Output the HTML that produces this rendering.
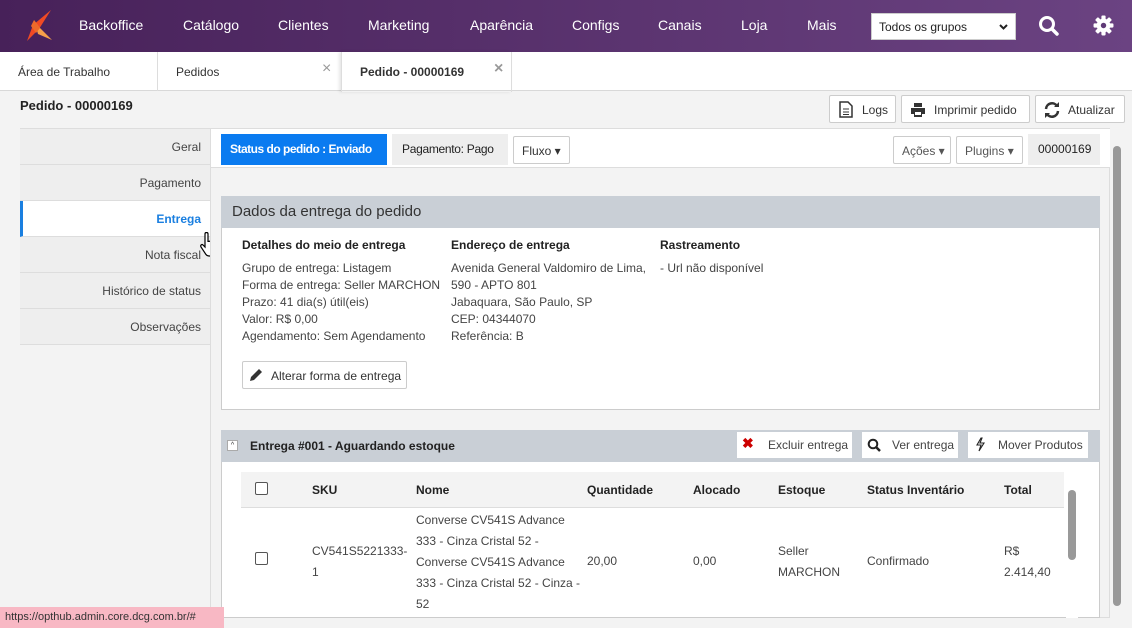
<!DOCTYPE html>
<html><head><meta charset="utf-8"><style>
*{box-sizing:border-box;margin:0;padding:0}
body{width:1132px;height:628px;overflow:hidden;background:#f3f3f3;font-family:"Liberation Sans",sans-serif;font-size:12px;color:#333;position:relative}
.a{position:absolute}
.hdr{left:0;top:0;width:1132px;height:52px;background:linear-gradient(90deg,#472159,#6b4382)}
.nav{color:#fff;font-size:14px;top:17px}
.tabs{left:0;top:52px;width:1132px;height:39px;background:#fff;border-bottom:1px solid #d8d8d8}
.tab{top:0;height:39px;border-right:1px solid #ddd;font-size:12px;padding-top:13px;padding-left:18px}
.x{color:#999;font-size:16px;top:8px}
.btn{background:#fff;border:1px solid #ccc;border-radius:2px;height:28px;font-size:12px;padding:7px 8px;white-space:nowrap}
.menu{left:20px;width:191px;height:36px;background:#eee;border-bottom:1px solid #ddd;text-align:right;padding:11px 10px 0 0;font-size:12px;color:#444}
.lbl{font-weight:bold;font-size:12px;color:#222}
.txt{font-size:12px;line-height:17px;color:#444}
th{text-align:left;font-size:12px;color:#222;height:36px;font-weight:bold}
td{font-size:12px;color:#444;line-height:21px}
.cb{width:13px;height:13px;border:1px solid #555;border-radius:2px;background:#fff;display:inline-block}
</style></head><body>
<div class="a hdr"></div>
<svg class="a" style="left:24px;top:9px" width="32" height="34" viewBox="0 0 32 34"><path d="M27 1 L9 16 L3 32 L15 20 Z" fill="#f04a24"/><path d="M10 11 L16 19 L28 31 L14 25 Z" fill="#f6a04a"/><path d="M10 11 L16 19 L12 24 L7 17Z" fill="#ee6a2a"/></svg>
<div class="a nav" style="left:79px">Backoffice</div>
<div class="a nav" style="left:183px">Catálogo</div>
<div class="a nav" style="left:278px">Clientes</div>
<div class="a nav" style="left:368px">Marketing</div>
<div class="a nav" style="left:470px">Aparência</div>
<div class="a nav" style="left:572px">Configs</div>
<div class="a nav" style="left:658px">Canais</div>
<div class="a nav" style="left:741px">Loja</div>
<div class="a nav" style="left:807px">Mais</div>
<div class="a" style="left:871px;top:13px;width:145px;height:27px;background:#fff;border:1px solid #ccc;padding:6px 7px;font-size:12px;color:#222">Todos os grupos<svg class="a" style="right:7px;top:10px" width="9" height="6" viewBox="0 0 9 6"><path d="M1 1l3.5 3.5L8 1" fill="none" stroke="#222" stroke-width="2"/></svg></div>
<svg class="a" style="left:1038px;top:15px" width="22" height="22" viewBox="0 0 22 22"><circle cx="9" cy="9" r="6.5" fill="none" stroke="#fff" stroke-width="3"/><path d="M14 14 L19 19" stroke="#fff" stroke-width="3.5" stroke-linecap="round"/></svg>
<svg class="a" style="left:1093px;top:15px" width="21" height="21" viewBox="0 0 20 20"><g fill="#fff"><circle cx="10" cy="10" r="6.5"/><rect x="8" y="0.5" width="4" height="19" rx="1"/><rect x="0.5" y="8" width="19" height="4" rx="1"/><rect x="8" y="0.5" width="4" height="19" rx="1" transform="rotate(45 10 10)"/><rect x="8" y="0.5" width="4" height="19" rx="1" transform="rotate(-45 10 10)"/></g><circle cx="10" cy="10" r="2.6" fill="#5f3a77"/></svg>
<div class="a tabs"></div>
<div class="a tab" style="left:0;width:158px;top:52px">Área de Trabalho</div>
<div class="a tab" style="left:158px;width:183px;top:52px;border-right:none">Pedidos<span class="a x" style="left:164px">×</span></div>
<div class="a tab" style="left:341px;width:171px;top:52px;height:40px;font-weight:bold;border-left:1px solid #ddd;box-shadow:-2px 0 3px rgba(0,0,0,.1)">Pedido - 00000169<span class="a x" style="left:152px">×</span></div>
<div class="a" style="left:20px;top:98px;font-weight:bold;font-size:13px;color:#222">Pedido - 00000169</div>
<div class="a btn" style="left:829px;top:95px;width:67px;padding-left:32px">Logs<svg class="a" style="left:9px;top:5px" width="14" height="17" viewBox="0 0 14 17"><path d="M1 1h8l4 4v11H1z" fill="none" stroke="#333" stroke-width="1.5"/><path d="M4 8h6M4 11h6M4 13.5h6" stroke="#333"/></svg></div>
<div class="a btn" style="left:901px;top:95px;width:129px;padding-left:32px">Imprimir pedido<svg class="a" style="left:8px;top:7px" width="16" height="14" viewBox="0 0 16 14"><path d="M4 0h8v4H4zM1 5h14v6h-3v3H4v-3H1z" fill="#333"/><rect x="5" y="9" width="6" height="3" fill="#fff"/></svg></div>
<div class="a btn" style="left:1035px;top:95px;width:90px;padding-left:32px">Atualizar<svg class="a" style="left:8px;top:6px" width="16" height="16" viewBox="0 0 16 16"><path d="M2 7a6 6 0 0 1 11-3M14 9a6 6 0 0 1-11 3" fill="none" stroke="#333" stroke-width="2.5"/><path d="M10 5h5V0zM6 11H1v5z" fill="#333"/></svg></div>
<div class="a" style="left:20px;top:128px;width:191px;height:217px;border:1px solid #ddd;border-right:none"></div>
<div class="a menu" style="top:129px">Geral</div>
<div class="a menu" style="top:165px">Pagamento</div>
<div class="a menu" style="top:201px;background:#fff;color:#1a7fe0;font-weight:bold;border-left:3px solid #1a7fe0">Entrega</div>
<div class="a menu" style="top:237px">Nota fiscal</div>
<div class="a menu" style="top:273px">Histórico de status</div>
<div class="a menu" style="top:309px">Observações</div>
<svg class="a" style="left:200px;top:232px" width="20" height="26" viewBox="0 0 20 26"><path d="M5 2c0-2 3-2 3 0v8c0-1 3-1 3 0v1c0-1 3-1 3 0v1c0-1 3-1 3 1v6c0 3-2 5-5 5H9c-2 0-3-1-4-3l-4-6c-1-2 1-3 2-2l2 2z" fill="#fff" stroke="#000" stroke-width="1.2"/></svg>
<div class="a" style="left:210px;top:128px;width:900px;height:490px;background:#f3f3f3;border:1px solid #ddd"></div>
<div class="a" style="left:211px;top:129px;width:899px;height:39px;background:#fff;border-bottom:1px solid #ddd"></div>
<div class="a" style="left:221px;top:134px;width:166px;height:31px;background:#0a7bf0;color:#fff;font-weight:bold;padding:8px 0 0 9px;font-size:12px;white-space:nowrap;letter-spacing:-0.5px">Status do pedido : Enviado</div>
<div class="a" style="left:392px;top:134px;width:116px;height:31px;background:#eee;color:#222;padding:8px 0 0 10px;font-size:12px;white-space:nowrap;letter-spacing:-0.3px">Pagamento: Pago</div>
<div class="a btn" style="left:513px;top:136px;width:57px">Fluxo ▾</div>
<div class="a btn" style="left:893px;top:136px;width:58px;color:#555">Ações ▾</div>
<div class="a btn" style="left:956px;top:136px;width:67px;color:#555">Plugins ▾</div>
<div class="a" style="left:1028px;top:134px;width:72px;height:31px;background:#eee;color:#222;padding:8px 10px">00000169</div>
<div class="a" style="left:1110px;top:128px;width:22px;height:490px;background:#f3f3f3"></div>
<div class="a" style="left:1113px;top:146px;width:8px;height:460px;background:#999;border-radius:4px"></div>
<div class="a" style="left:221px;top:196px;width:879px;height:214px;background:#fff;border:1px solid #ccc"></div>
<div class="a" style="left:221px;top:196px;width:879px;height:32px;background:#c9cfd6;font-size:15px;color:#333;padding:7px 11px">Dados da entrega do pedido</div>
<div class="a lbl" style="left:242px;top:238px">Detalhes do meio de entrega</div>
<div class="a txt" style="left:242px;top:260px">Grupo de entrega: Listagem<br>Forma de entrega: Seller MARCHON<br>Prazo: 41 dia(s) útil(eis)<br>Valor: R$ 0,00<br>Agendamento: Sem Agendamento</div>
<div class="a lbl" style="left:451px;top:238px">Endereço de entrega</div>
<div class="a txt" style="left:451px;top:260px">Avenida General Valdomiro de Lima,<br>590 - APTO 801<br>Jabaquara, São Paulo, SP<br>CEP: 04344070<br>Referência: B</div>
<div class="a lbl" style="left:660px;top:238px">Rastreamento</div>
<div class="a txt" style="left:660px;top:260px">- Url não disponível</div>
<div class="a btn" style="left:242px;top:361px;width:165px;height:28px;padding-left:28px;color:#333">Alterar forma de entrega<svg class="a" style="left:6px;top:6px" width="14" height="14" viewBox="0 0 14 14"><path d="M1 13l1-4 8-8 3 3-8 8z" fill="#333"/></svg></div>
<div class="a" style="left:221px;top:430px;width:879px;height:188px;background:#fff;border:1px solid #ccc"></div>
<div class="a" style="left:221px;top:430px;width:879px;height:32px;background:#c9cfd6"></div>
<div class="a" style="left:227px;top:440px;width:11px;height:11px;background:#fff;border:1px solid #aaa;font-size:7px;text-align:center;line-height:9px">^</div>
<div class="a lbl" style="left:250px;top:439px">Entrega #001 - Aguardando estoque</div>
<div class="a" style="left:737px;top:432px;width:115px;height:26px;background:#fff;padding:6px 0 0 31px;color:#444">Excluir entrega<span class="a" style="left:5px;top:3px;color:#c00;font-weight:bold;font-size:14px">✖</span></div>
<div class="a" style="left:862px;top:432px;width:96px;height:26px;background:#fff;padding:6px 0 0 30px;color:#444">Ver entrega<svg class="a" style="left:5px;top:6px" width="14" height="14" viewBox="0 0 14 14"><circle cx="6" cy="6" r="4.3" fill="none" stroke="#222" stroke-width="2"/><path d="M9 9l4 4" stroke="#222" stroke-width="2.5"/></svg></div>
<div class="a" style="left:968px;top:432px;width:120px;height:26px;background:#fff;padding:6px 0 0 30px;color:#444">Mover Produtos<svg class="a" style="left:7px;top:5px" width="10" height="15" viewBox="0 0 10 15"><path d="M6 1L2 8h4l-2 6 5-8H5l2-5z" fill="none" stroke="#222" stroke-width="1.1"/></svg></div>
<div class="a" style="left:241px;top:472px;width:823px;height:36px;background:#f3f3f3;border-bottom:1px solid #ddd"></div>
<table class="a" style="left:241px;top:472px;width:823px;border-collapse:collapse">
<tr><th style="width:71px;padding-left:14px"><span class="cb"></span></th><th style="width:104px">SKU</th><th style="width:171px">Nome</th><th style="width:106px">Quantidade</th><th style="width:85px">Alocado</th><th style="width:89px">Estoque</th><th style="width:137px">Status Inventário</th><th>Total</th></tr>
<tr><td style="padding-left:14px"><span class="cb"></span></td><td>CV541S5221333-<br>1</td><td style="padding-top:2px">Converse CV541S Advance 333 - Cinza Cristal 52 - Converse CV541S Advance 333 - Cinza Cristal 52 - Cinza - 52</td><td>20,00</td><td>0,00</td><td>Seller<br>MARCHON</td><td>Confirmado</td><td>R$<br>2.414,40</td></tr>
</table>
<div class="a" style="left:1066px;top:478px;width:12px;height:140px;background:#fff"></div>
<div class="a" style="left:1068px;top:490px;width:8px;height:70px;background:#999;border-radius:4px"></div>
<div class="a" style="left:0;top:607px;width:224px;height:21px;background:#f8b8c4;color:#333;font-size:11px;padding:4px 5px">https://opthub.admin.core.dcg.com.br/#</div>
</body></html>
